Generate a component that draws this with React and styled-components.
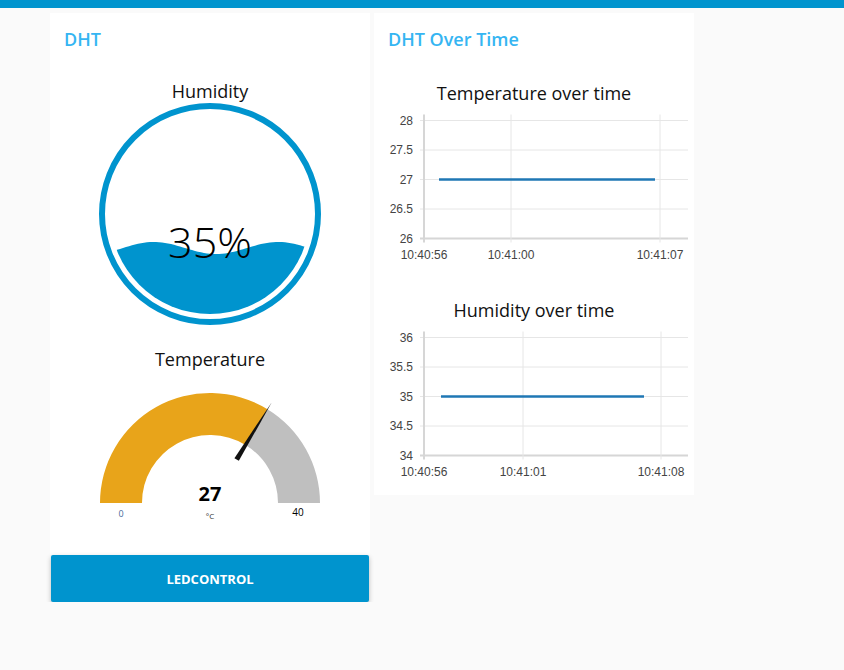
import React from "react";
import styled, { createGlobalStyle } from "styled-components";

const GlobalStyle = createGlobalStyle`
  body {
    margin: 0;
    background: #fafafa;
    font-family: "Open Sans", "Noto Sans", sans-serif;
  }
`;

const wavePath = () => {
  // wave across the liquid gauge, in svg coords (222 x 222)
  let d = "M 0 222 L 0 150";
  for (let x = 0; x <= 222; x += 3) {
    const y = 145 - 6 * Math.cos((2 * Math.PI * (x - 55)) / 124);
    d += ` L ${x} ${y.toFixed(2)}`;
  }
  return d + " L 222 222 Z";
};

const LiquidGauge = ({ value }) => (
  <svg width="222" height="222" viewBox="0 0 222 222">
    <defs>
      <clipPath id="fill-clip">
        <circle cx="111" cy="111" r="100" />
      </clipPath>
    </defs>
    <circle cx="111" cy="111" r="108" fill="none" stroke="#0094ce" strokeWidth="6" />
    <path d={wavePath()} fill="#0094ce" clipPath="url(#fill-clip)" />
    <text
      x="111"
      y="155"
      textAnchor="middle"
      fontSize="43"
      fontWeight="300"
      fill="#000"
      fontFamily="'Open Sans', 'Noto Sans', sans-serif"
    >
      {value}%
    </text>
  </svg>
);

const DonutGauge = ({ value, min, max, unit }) => {
  const cx = 160;
  const cy = 132;
  const ro = 110;
  const ri = 68;
  const t = (Math.PI * (value - min)) / (max - min);
  const pt = (r) => [cx - r * Math.cos(t), cy - r * Math.sin(t)];
  const [ox, oy] = pt(ro);
  const [ix, iy] = pt(ri);
  const ux = -Math.cos(t);
  const uy = -Math.sin(t);
  const px = -uy;
  const py = ux;
  const bx = cx + 51 * ux;
  const by = cy + 51 * uy;
  const tx = cx + 118 * ux;
  const ty = cy + 118 * uy;
  const needle = `${bx + 2.6 * px},${by + 2.6 * py} ${bx - 2.6 * px},${by - 2.6 * py} ${tx},${ty}`;
  return (
    <svg width="320" height="154" viewBox="0 0 320 154">
      <path
        d={`M ${cx - ro} ${cy} A ${ro} ${ro} 0 0 1 ${ox} ${oy} L ${ix} ${iy} A ${ri} ${ri} 0 0 0 ${cx - ri} ${cy} Z`}
        fill="#e8a41a"
      />
      <path
        d={`M ${ox} ${oy} A ${ro} ${ro} 0 0 1 ${cx + ro} ${cy} L ${cx + ri} ${cy} A ${ri} ${ri} 0 0 0 ${ix} ${iy} Z`}
        fill="#bfbfbf"
      />
      <polygon points={needle} fill="#111" />
      <text x={cx} y="130" textAnchor="middle" fontSize="20" fontWeight="700" fill="#000">
        {value}
      </text>
      <text x={cx} y="148" textAnchor="middle" fontSize="8" fill="#333">
        {unit}
      </text>
      <text x="71" y="146" textAnchor="middle" fontSize="9" fill="#4a6a9a">
        {min}
      </text>
      <text x="248" y="145" textAnchor="middle" fontSize="10" fill="#000">
        {max}
      </text>
    </svg>
  );
};

const LineChart = ({ yTicks, xTicks, line }) => {
  const top = 14.5;
  const step = 29.5;
  const left = 50;
  const right = 314;
  const bottom = top + step * 4;
  return (
    <svg width="320" height="164" viewBox="0 0 320 164">
      {yTicks.map((v, i) => (
        <g key={v}>
          <line
            x1={left - 4}
            x2={right}
            y1={top + i * step}
            y2={top + i * step}
            stroke={i === 4 ? "#d6d6d6" : "#e6e6e6"}
            strokeWidth={i === 4 ? 2 : 1}
          />
          <text
            x={left - 11}
            y={top + i * step + 4}
            textAnchor="end"
            fontSize="12"
            fill="#444"
            fontFamily="'Liberation Sans', Arial, sans-serif"
          >
            {v}
          </text>
        </g>
      ))}
      {xTicks.map(([x, label], i) => (
        <g key={label}>
          <line
            x1={x}
            x2={x}
            y1={top - 6}
            y2={bottom + 4}
            stroke={i === 0 ? "#d6d6d6" : "#e6e6e6"}
            strokeWidth={i === 0 ? 2 : 1}
          />
          <text
            x={x}
            y={bottom + 20}
            textAnchor="middle"
            fontSize="12"
            fill="#444"
            fontFamily="'Liberation Sans', Arial, sans-serif"
          >
            {label}
          </text>
        </g>
      ))}
      <line
        x1={line.x1}
        x2={line.x2}
        y1={top + step * 2}
        y2={top + step * 2}
        stroke="#1f77b4"
        strokeWidth="2.5"
      />
    </svg>
  );
};

const App = () => (
  <>
    <GlobalStyle />
    <TopBar />
    <Main>
      <Column>
        <Card $height={542}>
          <GroupTitle>DHT</GroupTitle>
          <WidgetLabel $top={12} $height={24}>
            Humidity
          </WidgetLabel>
          <Centered>
            <LiquidGauge value={35} />
          </Centered>
          <WidgetLabel $top={22} $height={24}>
            Temperature
          </WidgetLabel>
          <DonutGauge value={27} min={0} max={40} unit="°C" />
        </Card>
        <ActionButton>LEDCONTROL</ActionButton>
      </Column>
      <Column>
        <Card $height={482}>
          <GroupTitle>DHT Over Time</GroupTitle>
          <WidgetLabel $top={14} $height={25}>
            Temperature over time
          </WidgetLabel>
          <LineChart
            yTicks={["28", "27.5", "27", "26.5", "26"]}
            xTicks={[
              [50, "10:40:56"],
              [137, "10:41:00"],
              [286, "10:41:07"],
            ]}
            line={{ x1: 65, x2: 281 }}
          />
          <WidgetLabel $top={28} $height={25}>
            Humidity over time
          </WidgetLabel>
          <LineChart
            yTicks={["36", "35.5", "35", "34.5", "34"]}
            xTicks={[
              [50, "10:40:56"],
              [149, "10:41:01"],
              [287, "10:41:08"],
            ]}
            line={{ x1: 67, x2: 270 }}
          />
        </Card>
      </Column>
    </Main>
  </>
);

export default App;

const TopBar = styled.div`
  height: 8px;
  background: #0094ce;
`;

const Main = styled.main`
  display: flex;
  align-items: flex-start;
  gap: 4px;
  padding: 5px 0 0 50px;
`;

const Column = styled.div`
  display: flex;
  flex-direction: column;
  width: 320px;
`;

const Card = styled.section`
  display: flex;
  flex-direction: column;
  height: ${({ $height }) => $height}px;
  background: #fff;
  box-sizing: border-box;
`;

const GroupTitle = styled.h2`
  margin: 0;
  height: 54px;
  padding: 15px 14px 0;
  box-sizing: border-box;
  font-size: 18px;
  line-height: 22px;
  font-weight: 600;
  color: #35b5f2;
`;

const WidgetLabel = styled.div`
  margin-top: ${({ $top }) => $top}px;
  height: ${({ $height }) => $height}px;
  line-height: ${({ $height }) => $height}px;
  text-align: center;
  font-size: 18px;
  font-weight: 500;
  color: #111;
`;

const Centered = styled.div`
  display: flex;
  justify-content: center;
`;

const ActionButton = styled.button`
  margin: 0 1px;
  height: 47px;
  border: none;
  border-radius: 2px;
  background: #0094ce;
  color: #fff;
  font-family: "Open Sans", "Noto Sans", sans-serif;
  font-size: 13px;
  font-weight: 700;
  box-shadow: 0 2px 5px rgba(0, 0, 0, 0.25);
  cursor: pointer;
`;
